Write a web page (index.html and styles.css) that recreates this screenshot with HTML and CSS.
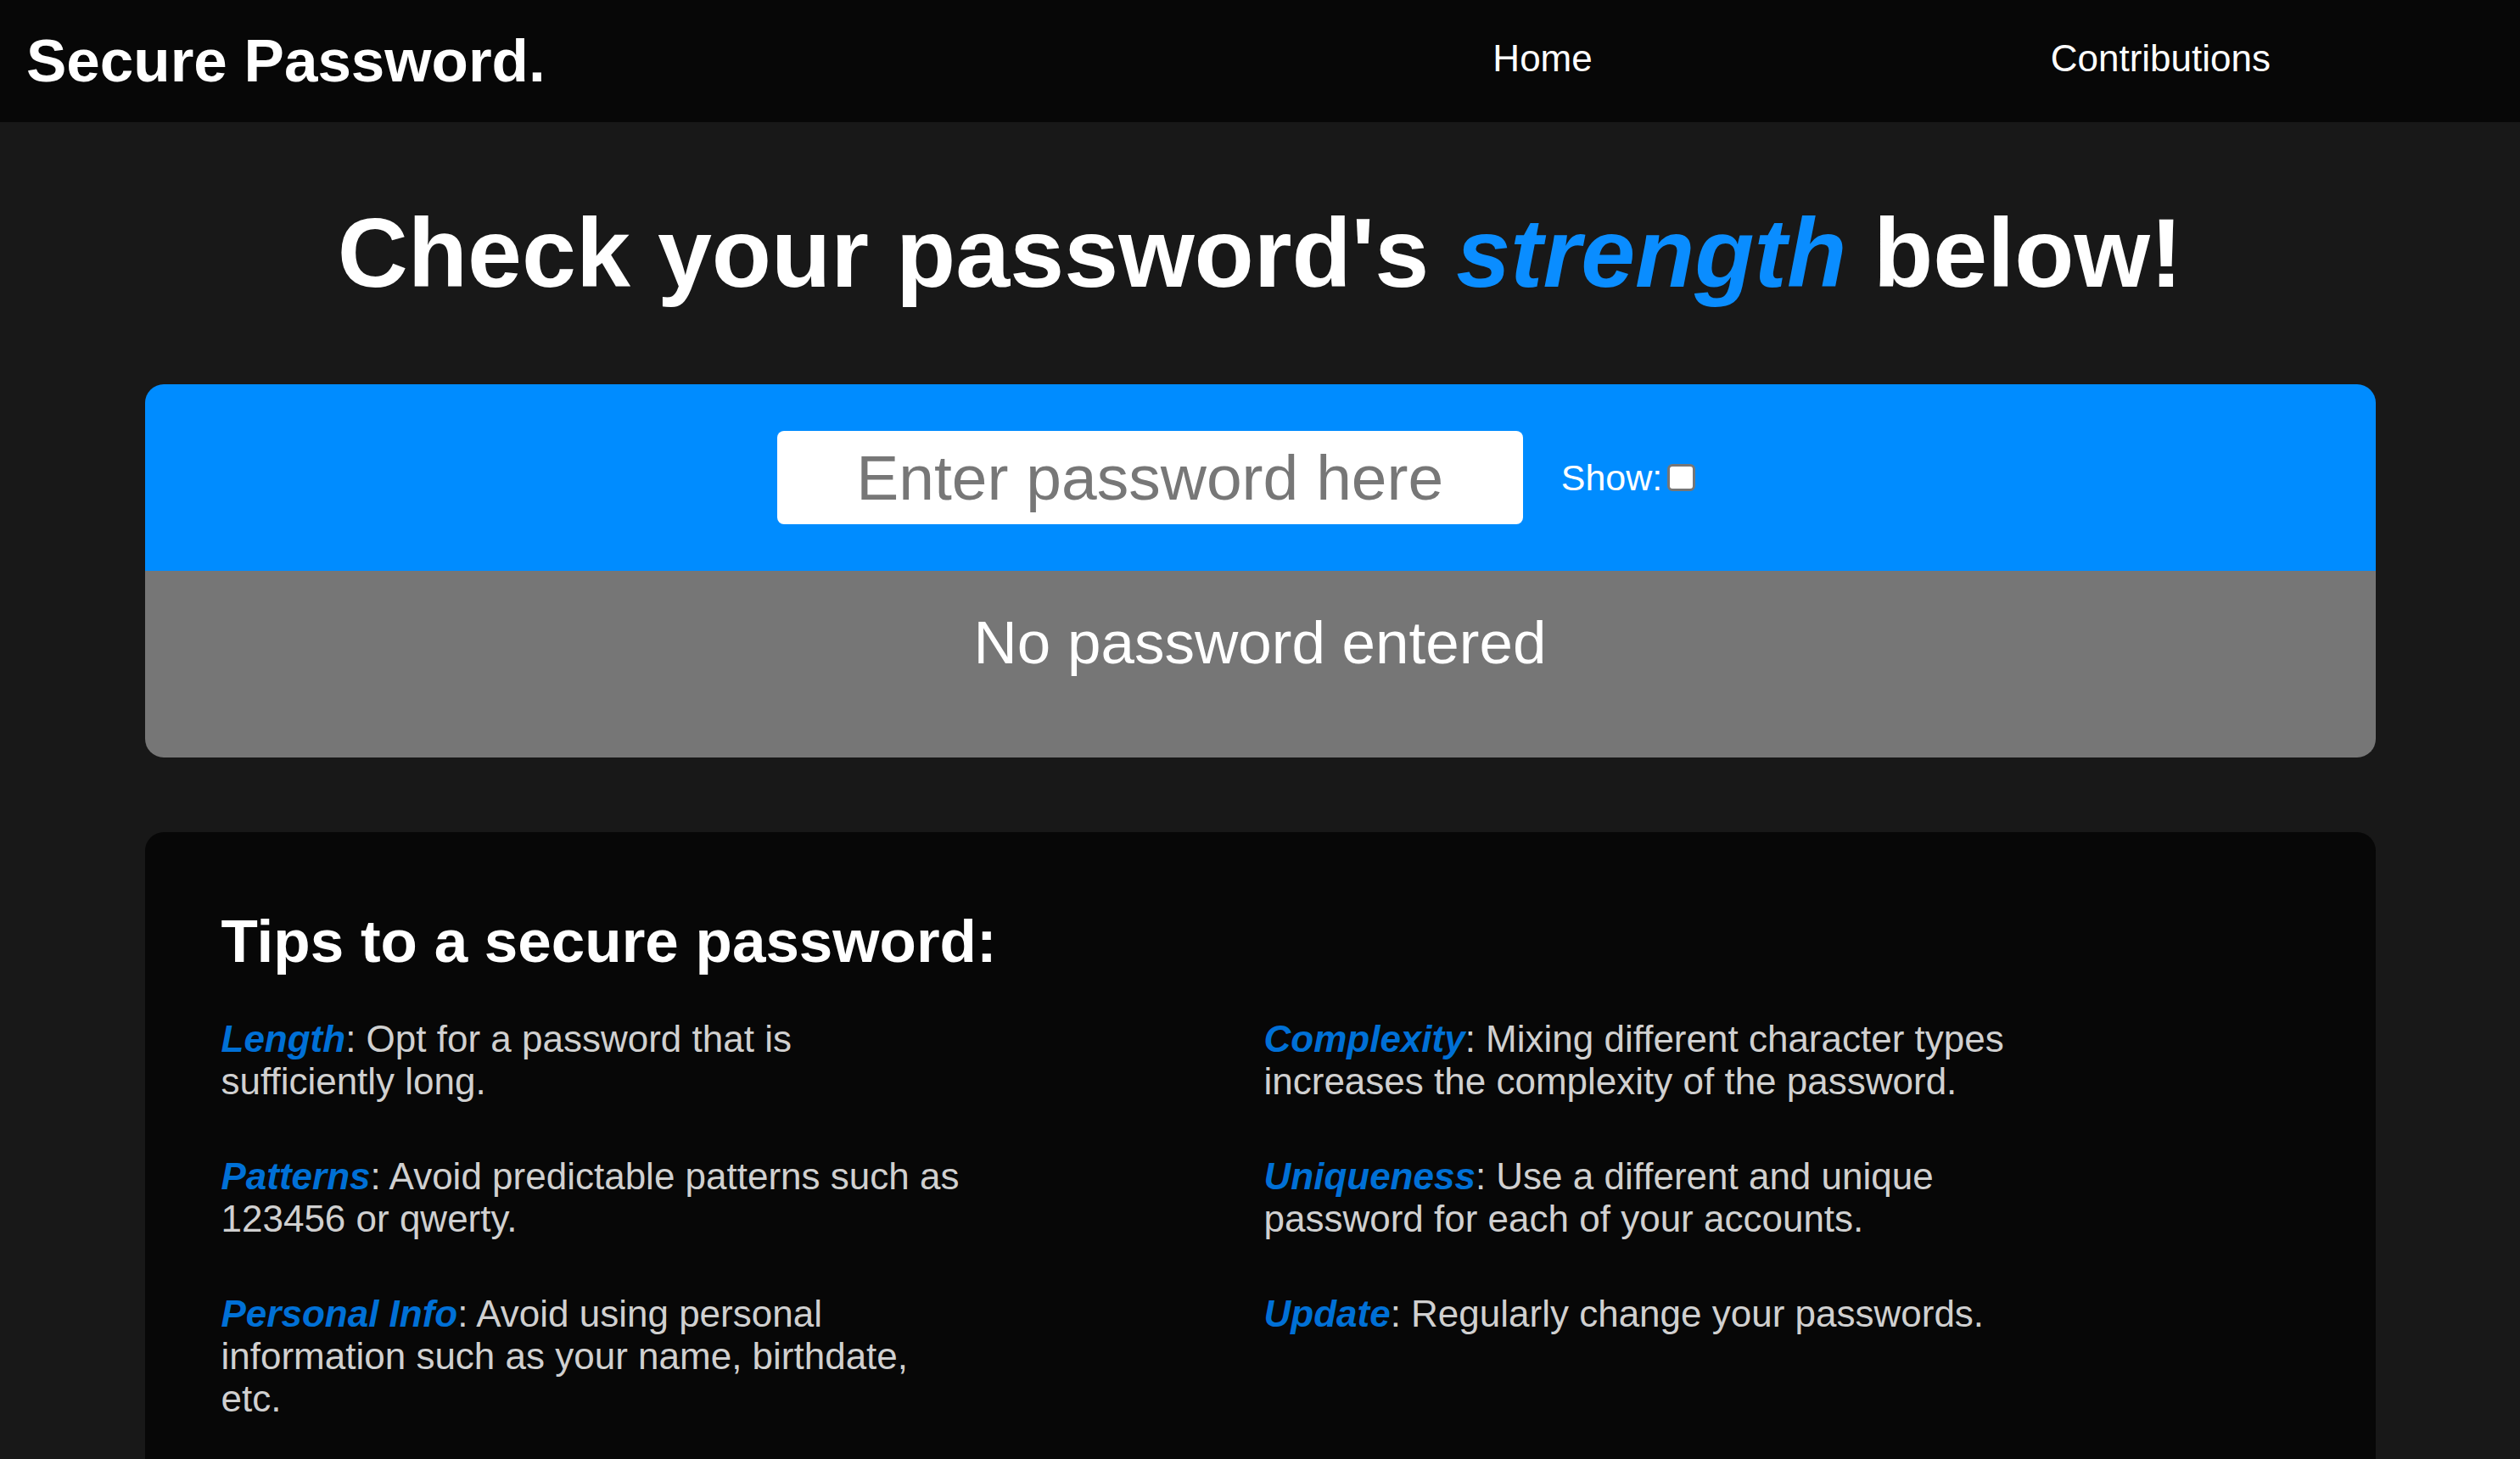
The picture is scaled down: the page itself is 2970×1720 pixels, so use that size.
FILE: index.html
```html
<!DOCTYPE html>
<html lang="en">
<head>
<meta charset="utf-8">
<title>Secure Password.</title>
<link rel="stylesheet" href="styles.css">
</head>
<body>
<header class="nav">
  <div class="logo">Secure Password.</div>
  <nav class="links">
    <a class="link" href="#">Home</a>
    <a class="link" href="#">Contributions</a>
  </nav>
</header>
<main class="main">
  <h1 class="title">Check your password's <em class="accent">strength</em> below!</h1>
  <section class="checker">
    <div class="entry">
      <input class="pw" type="password" placeholder="Enter password here">
      <label class="show">Show:<input class="box" type="checkbox"></label>
    </div>
    <div class="result">No password entered</div>
  </section>
  <section class="tips">
    <h2 class="tips-title">Tips to a secure password:</h2>
    <div class="tips-grid">
      <p class="tip"><em class="key">Length</em>: Opt for a password that is sufficiently long.</p>
      <p class="tip"><em class="key">Complexity</em>: Mixing different character types increases the complexity of the password.</p>
      <p class="tip"><em class="key">Patterns</em>: Avoid predictable patterns such as 123456 or qwerty.</p>
      <p class="tip"><em class="key">Uniqueness</em>: Use a different and unique password for each of your accounts.</p>
      <p class="tip"><em class="key">Personal Info</em>: Avoid using personal information such as your name, birthdate, etc.</p>
      <p class="tip"><em class="key">Update</em>: Regularly change your passwords.</p>
    </div>
  </section>
</main>
</body>
</html>
```
FILE: styles.css
```css
html, body {
  margin: 0;
  padding: 0;
}
body {
  background: #181818;
  font-family: "Liberation Sans", Arial, sans-serif;
  color: #ffffff;
  overflow: hidden;
}
.nav {
  height: 144px;
  background: #070707;
  display: flex;
  align-items: center;
  padding: 0 294px 6px 31px;
  box-sizing: border-box;
}
.logo {
  font-size: 71px;
  font-weight: bold;
  line-height: 1;
  margin-top: 4px;
}
.links {
  margin-left: auto;
  display: flex;
  gap: 540px;
}
.link {
  color: #ffffff;
  text-decoration: none;
  font-size: 44px;
  line-height: 1;
}
.main {
  display: flex;
  flex-direction: column;
}
.title {
  margin: 88px 0 89px;
  text-align: center;
  font-size: 115px;
  font-weight: bold;
  line-height: 132px;
}
.accent {
  color: #0a8dff;
  font-style: italic;
}
.checker {
  width: 2629px;
  margin: 0 auto;
  border-radius: 22px;
  overflow: hidden;
}
.entry {
  height: 220px;
  box-sizing: border-box;
  background: #008cff;
  display: flex;
  align-items: center;
  justify-content: center;
  padding-right: 56px;
  gap: 45px;
}
.pw {
  width: 879px;
  height: 110px;
  box-sizing: border-box;
  border: none;
  border-radius: 8px;
  background: #ffffff;
  font-family: "Liberation Sans", Arial, sans-serif;
  font-size: 75px;
  text-align: center;
  color: #333;
  outline: none;
  padding: 0 10px;
}
.pw::placeholder {
  color: #777777;
}
.show {
  display: flex;
  align-items: center;
  gap: 6px;
  font-size: 43px;
  color: #ffffff;
}
.box {
  appearance: none;
  -webkit-appearance: none;
  width: 33px;
  height: 32px;
  margin: 0;
  box-sizing: border-box;
  border: 3px solid #767676;
  border-radius: 6px;
  background: #ffffff;
}
.result {
  height: 220px;
  box-sizing: border-box;
  background: #767676;
  text-align: center;
  font-size: 71px;
  line-height: 82px;
  padding-top: 44px;
  color: #ffffff;
}
.tips {
  width: 2629px;
  box-sizing: border-box;
  margin: 88px auto 0;
  background: #070707;
  border-radius: 22px;
  padding: 88px 90px 90px;
}
.tips-title {
  margin: 0 0 49px;
  font-size: 71px;
  font-weight: bold;
  line-height: 82px;
}
.tips-grid {
  display: grid;
  grid-template-columns: 1fr 1fr;
  column-gap: 9px;
  row-gap: 62px;
}
.tip {
  margin: 0;
  max-width: 880px;
  font-size: 44px;
  line-height: 50px;
  color: #d0d0d0;
}
.key {
  color: #0070d6;
  font-weight: bold;
  font-style: italic;
}
```
